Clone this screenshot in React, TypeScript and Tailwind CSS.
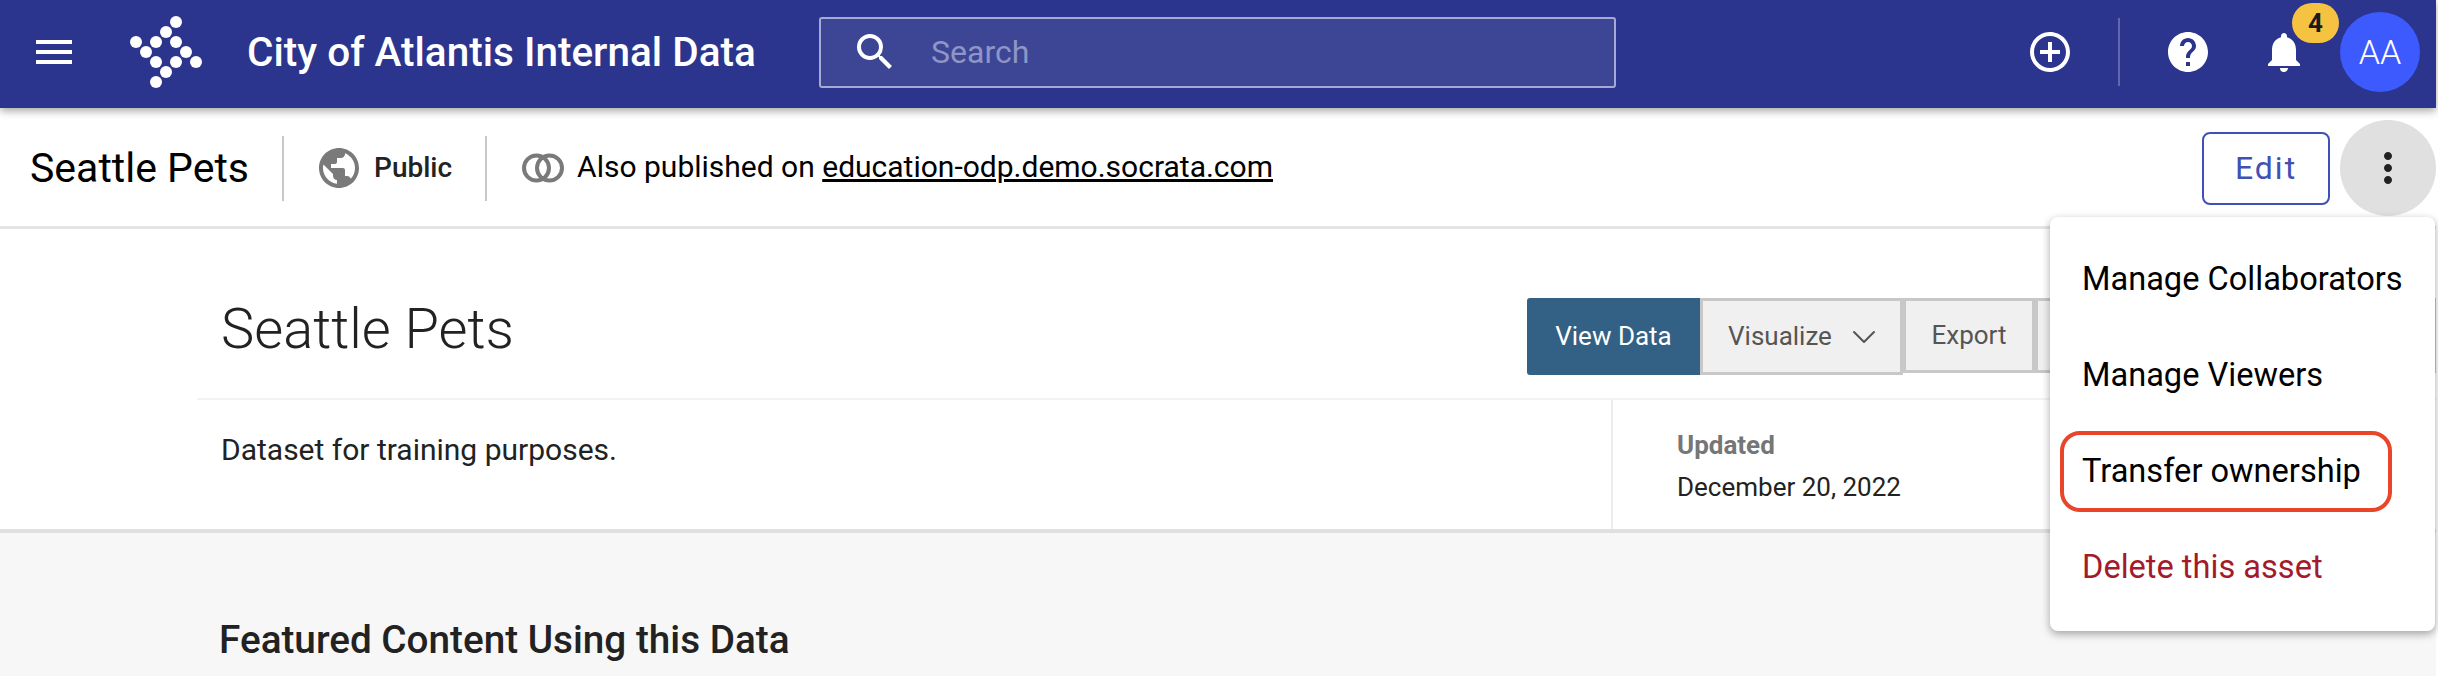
import { ChevronDown } from 'lucide-react';
import {
  MdAddCircleOutline,
  MdHelp,
  MdMenu,
  MdMoreVert,
  MdNotifications,
  MdPublic,
  MdSearch,
} from 'react-icons/md';

const logoDots = [
  [46, 7], [36, 17], [6, 27], [26, 27], [46, 27], [16, 37],
  [56, 37], [26, 47], [46, 47], [66, 47], [36, 57], [26, 67],
];

function Logo() {
  return (
    <svg width="72" height="74" viewBox="0 0 72 74" fill="#fff">
      {logoDots.map(([cx, cy]) => (
        <circle key={`${cx}-${cy}`} cx={cx} cy={cy} r="6" />
      ))}
    </svg>
  );
}

function Rings() {
  return (
    <svg width="42" height="30" viewBox="0 0 42 30" fill="none" stroke="#7a7a7a" strokeWidth="4">
      <circle cx="14.5" cy="15" r="12.5" />
      <circle cx="27.5" cy="15" r="12.5" />
    </svg>
  );
}

function TopBar() {
  return (
    <header className="relative z-10 flex h-[108px] items-center bg-[#2b358d] pb-[4px] pl-[30px] pr-[16px] shadow-[0_3px_8px_rgba(0,0,0,0.35)]">
      <MdMenu size={48} color="#fff" />
      <div className="ml-[52px]">
        <Logo />
      </div>
      <div className="ml-[45px] w-[572px] text-[40.5px] font-medium leading-none text-white">
        City of Atlantis Internal Data
      </div>
      <div className="flex h-[71px] w-[797px] items-center rounded-[3px] border-2 border-[#a5a9d3] bg-[#3c4695] pl-[30px]">
        <MdSearch size={48} color="#fff" />
        <span className="ml-[32px] text-[32px] text-[#8f95c6]">Search</span>
      </div>
      <div className="ml-auto flex items-center">
        <MdAddCircleOutline size={48} color="#fff" />
        <div className="ml-[44px] h-[68px] w-[2px] bg-[#5f68ad]" />
        <div className="ml-[44px]">
          <MdHelp size={48} color="#fff" />
        </div>
        <div className="relative ml-[48px]">
          <MdNotifications size={48} color="#fff" />
          <span className="absolute left-[32px] top-[-25px] flex h-[40px] w-[47px] items-center justify-center rounded-full bg-[#f5c242] text-[26px] font-bold text-[#1a1a1a]">
            4
          </span>
        </div>
        <div className="ml-[32px] flex h-[80px] w-[80px] items-center justify-center rounded-full bg-[#3d5afe] text-[34px] font-light text-white">
          AA
        </div>
      </div>
    </header>
  );
}

function AssetBar() {
  return (
    <div className="flex h-[121px] items-center border-b-[3px] border-[#e4e4e4] bg-white pl-[30px] pt-[2px] text-black">
      <h2 className="text-[41px] leading-none">Seattle Pets</h2>
      <div className="ml-[33px] h-[65px] w-[2px] bg-[#c8c8c8]" />
      <div className="ml-[31px]">
        <MdPublic size={48} color="#7a7a7a" />
      </div>
      <span className="ml-[11px] text-[28px] font-medium text-[#222]">Public</span>
      <div className="ml-[33px] h-[65px] w-[2px] bg-[#c8c8c8]" />
      <div className="ml-[35px]">
        <Rings />
      </div>
      <span className="mb-[3px] ml-[13px] text-[30px]">
        Also published on <a className="underline">education-odp.demo.socrata.com</a>
      </span>
      <div className="ml-auto flex items-center">
        <button className="h-[73px] w-[128px] rounded-lg border-2 border-[#3f51b5] text-[32px] tracking-[2px] text-[#3f51b5]">
          Edit
        </button>
        <button className="ml-[10px] flex h-[96px] w-[96px] items-center justify-center rounded-full bg-[#e0e0e0]">
          <MdMoreVert size={48} color="#222" />
        </button>
      </div>
    </div>
  );
}

function DatasetHeader() {
  const grey = 'flex items-center border-[3px] border-[#c8c8c8] bg-[#f0f0f0] text-[26px] text-[#555]';
  return (
    <section className="border-b-4 border-[#e0e0e0] bg-white pl-[197px]">
      <div className="flex h-[171px] items-start border-b-2 border-[#f3f3f3]">
        <h1 className="ml-[24px] mt-[72px] text-[56px] font-light leading-none text-[#222]">Seattle Pets</h1>
        <div className="ml-auto mt-[69px] flex w-[909px]">
          <button className="h-[77px] w-[173px] shrink-0 rounded-l-[3px] bg-[#336185] text-[26px] text-white">View Data</button>
          <button className={`${grey} h-[77px] w-[203px] shrink-0 gap-[12px] pl-[25px]`}>
            Visualize
            <ChevronDown size={40} strokeWidth={1.2} />
          </button>
          <button className={`${grey} h-[75px] w-[132px] shrink-0 justify-center`}>Export</button>
          <button className={`${grey} h-[75px] flex-1`} />
        </div>
      </div>
      <div className="flex h-[129px]">
        <p className="ml-[24px] mt-[30px] w-[1390px] text-[30px] leading-[40px] text-[#222]">
          Dataset for training purposes.
        </p>
        <div className="border-l-2 border-[#ececec] pl-[64px] pt-[28px]">
          <div className="text-[26px] font-bold leading-[34px] text-[#767676]">Updated</div>
          <div className="mt-[8px] text-[26px] leading-[34px] text-[#222]">December 20, 2022</div>
        </div>
      </div>
    </section>
  );
}

function ActionsMenu() {
  return (
    <div className="absolute left-[2050px] top-[217px] z-20 flex h-[414px] w-[385px] flex-col rounded-lg bg-white pb-[16px] pt-[15px] text-[32.6px] text-black shadow-[0_3px_8px_rgba(0,0,0,0.35)]">
      <div className="flex h-[96px] items-center pl-[32px]">Manage Collaborators</div>
      <div className="flex h-[96px] items-center pl-[32px]">Manage Viewers</div>
      <div className="relative flex h-[96px] items-center pl-[32px]">
        Transfer ownership
        <div className="absolute left-[10px] top-[7px] h-[81px] w-[332px] rounded-[20px] border-4 border-[#e8452a]" />
      </div>
      <div className="flex h-[96px] items-center pl-[32px] text-[#a31b2b]">Delete this asset</div>
    </div>
  );
}

export default function App() {
  return (
    <div className="h-[676px] w-[2438px] overflow-hidden bg-white font-['Roboto',sans-serif]">
      <div className="relative h-full w-[2436px] bg-[#f7f7f7]">
        <TopBar />
        <AssetBar />
        <DatasetHeader />
        <h3 className="ml-[219px] mt-[88px] text-[38.7px] font-medium leading-none text-[#222]">
          Featured Content Using this Data
        </h3>
        <ActionsMenu />
      </div>
    </div>
  );
}
